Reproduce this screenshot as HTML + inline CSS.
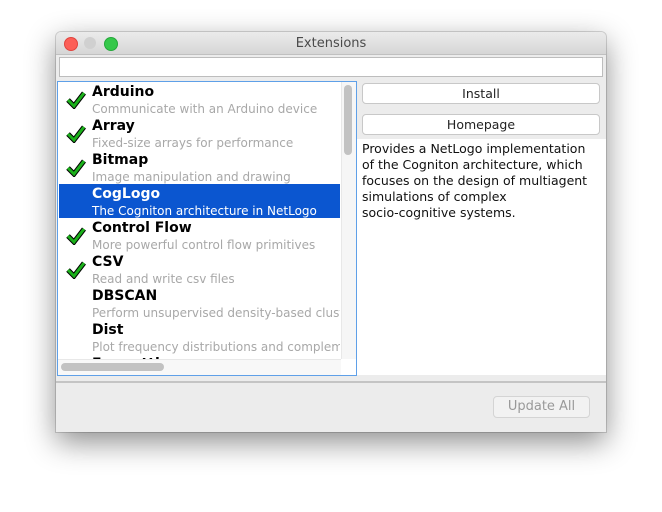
<!DOCTYPE html>
<html><head><style>
body{margin:0;width:662px;height:512px;background:#fff;position:relative;overflow:hidden;font-family:"DejaVu Sans","Liberation Sans",sans-serif}
.win{position:absolute;left:56px;top:32px;width:550px;height:400px;background:#ececec;border-radius:5px 5px 0 0;box-shadow:0 10px 30px rgba(0,0,0,.45),0 0 0 1px rgba(0,0,0,.15)}
.title{position:absolute;left:0;top:0;width:550px;height:22px;background:linear-gradient(#ebebeb,#d6d6d6);border-bottom:1px solid #c0c0c0;border-radius:5px 5px 0 0;text-align:center;font-size:13px;line-height:23px;color:#4a4a4a}
.dot{position:absolute;top:5px;width:12px;height:12px;border-radius:50%}
.abs{position:absolute}
.row{position:absolute;left:1px;width:281px;height:34px}
.row b{position:absolute;left:33px;top:2px;font-size:14px;color:#000}
.row span{position:absolute;left:33px;top:20px;font-size:12px;color:#a8a8a8;white-space:nowrap}
.sel{background:#0b56d0}.sel b,.sel span{color:#fff}
.chk{position:absolute;left:7px;top:9px}
.btn{position:absolute;left:306px;width:236px;height:19px;background:#fff;border:1px solid #c8c8c8;border-radius:4px;text-align:center;font-size:12.5px;line-height:19px;color:#222}
</style></head><body>
<div class="win">
<div class="title">Extensions
<div class="dot" style="left:8px;background:#fc5f57;border:.5px solid #e0443e"></div>
<div class="dot" style="left:28px;background:#d0d0d0"></div>
<div class="dot" style="left:48px;background:#35c84a;border:.5px solid #24a83a"></div>
</div>
<div class="abs" style="left:3px;top:25px;width:542px;height:18px;background:#fff;border:1px solid #bdbdbd"></div>
<div class="abs" style="left:1px;top:49px;width:298px;height:293px;background:#fff;border:1px solid #5fa0e8;overflow:hidden">
<div class="row" style="top:0"><svg class="chk" width="20" height="18"><path d="M2 9 L8 15 L18 2" stroke="#000" stroke-width="5" fill="none"/><path d="M2 9 L8 15 L18 2" stroke="#1bb01b" stroke-width="3" fill="none"/></svg><b>Arduino</b><span>Communicate with an Arduino device</span></div>
<div class="row" style="top:34px"><svg class="chk" width="20" height="18"><path d="M2 9 L8 15 L18 2" stroke="#000" stroke-width="5" fill="none"/><path d="M2 9 L8 15 L18 2" stroke="#1bb01b" stroke-width="3" fill="none"/></svg><b>Array</b><span>Fixed-size arrays for performance</span></div>
<div class="row" style="top:68px"><svg class="chk" width="20" height="18"><path d="M2 9 L8 15 L18 2" stroke="#000" stroke-width="5" fill="none"/><path d="M2 9 L8 15 L18 2" stroke="#1bb01b" stroke-width="3" fill="none"/></svg><b>Bitmap</b><span>Image manipulation and drawing</span></div>
<div class="row sel" style="top:102px"><b>CogLogo</b><span>The Cogniton architecture in NetLogo</span></div>
<div class="row" style="top:136px"><svg class="chk" width="20" height="18"><path d="M2 9 L8 15 L18 2" stroke="#000" stroke-width="5" fill="none"/><path d="M2 9 L8 15 L18 2" stroke="#1bb01b" stroke-width="3" fill="none"/></svg><b>Control Flow</b><span>More powerful control flow primitives</span></div>
<div class="row" style="top:170px"><svg class="chk" width="20" height="18"><path d="M2 9 L8 15 L18 2" stroke="#000" stroke-width="5" fill="none"/><path d="M2 9 L8 15 L18 2" stroke="#1bb01b" stroke-width="3" fill="none"/></svg><b>CSV</b><span>Read and write csv files</span></div>
<div class="row" style="top:204px;overflow:hidden"><b>DBSCAN</b><span>Perform unsupervised density-based clustering</span></div>
<div class="row" style="top:238px;overflow:hidden"><b>Dist</b><span>Plot frequency distributions and complements</span></div>
<div class="row" style="top:272px;overflow:hidden"><b>Formatting</b></div>
<div class="abs" style="left:283px;top:0;width:15px;height:277px;background:#f6f6f6;border-left:1px solid #e8e8e8"></div>
<div class="abs" style="left:286px;top:3px;width:8px;height:70px;background:#c2c2c2;border-radius:4px"></div>
<div class="abs" style="left:0;top:277px;width:283px;height:16px;background:#f8f8f8;border-top:1px solid #e8e8e8"></div>
<div class="abs" style="left:3px;top:281px;width:103px;height:8px;background:#c2c2c2;border-radius:4px"></div>
</div>
<div class="btn" style="top:51px">Install</div>
<div class="btn" style="top:82px">Homepage</div>
<div class="abs" style="left:301px;top:107px;width:249px;height:236px;background:#fff;font-size:12.5px;line-height:16px;color:#111;padding:2px 10px 0 5px;box-sizing:border-box">Provides a NetLogo implementation of the Cogniton architecture, which focuses on the design of multiagent simulations of complex socio‑cognitive systems.</div>
<div class="abs" style="left:0;top:349px;width:550px;height:2px;background:#c4c4c4"></div>
<div class="abs" style="left:437px;top:364px;width:95px;height:20px;border:1px solid #d4d4d4;border-radius:4px;background:#f2f2f2;color:#999;font-size:13px;text-align:center;line-height:20px">Update All</div>
</div>
</body></html>
